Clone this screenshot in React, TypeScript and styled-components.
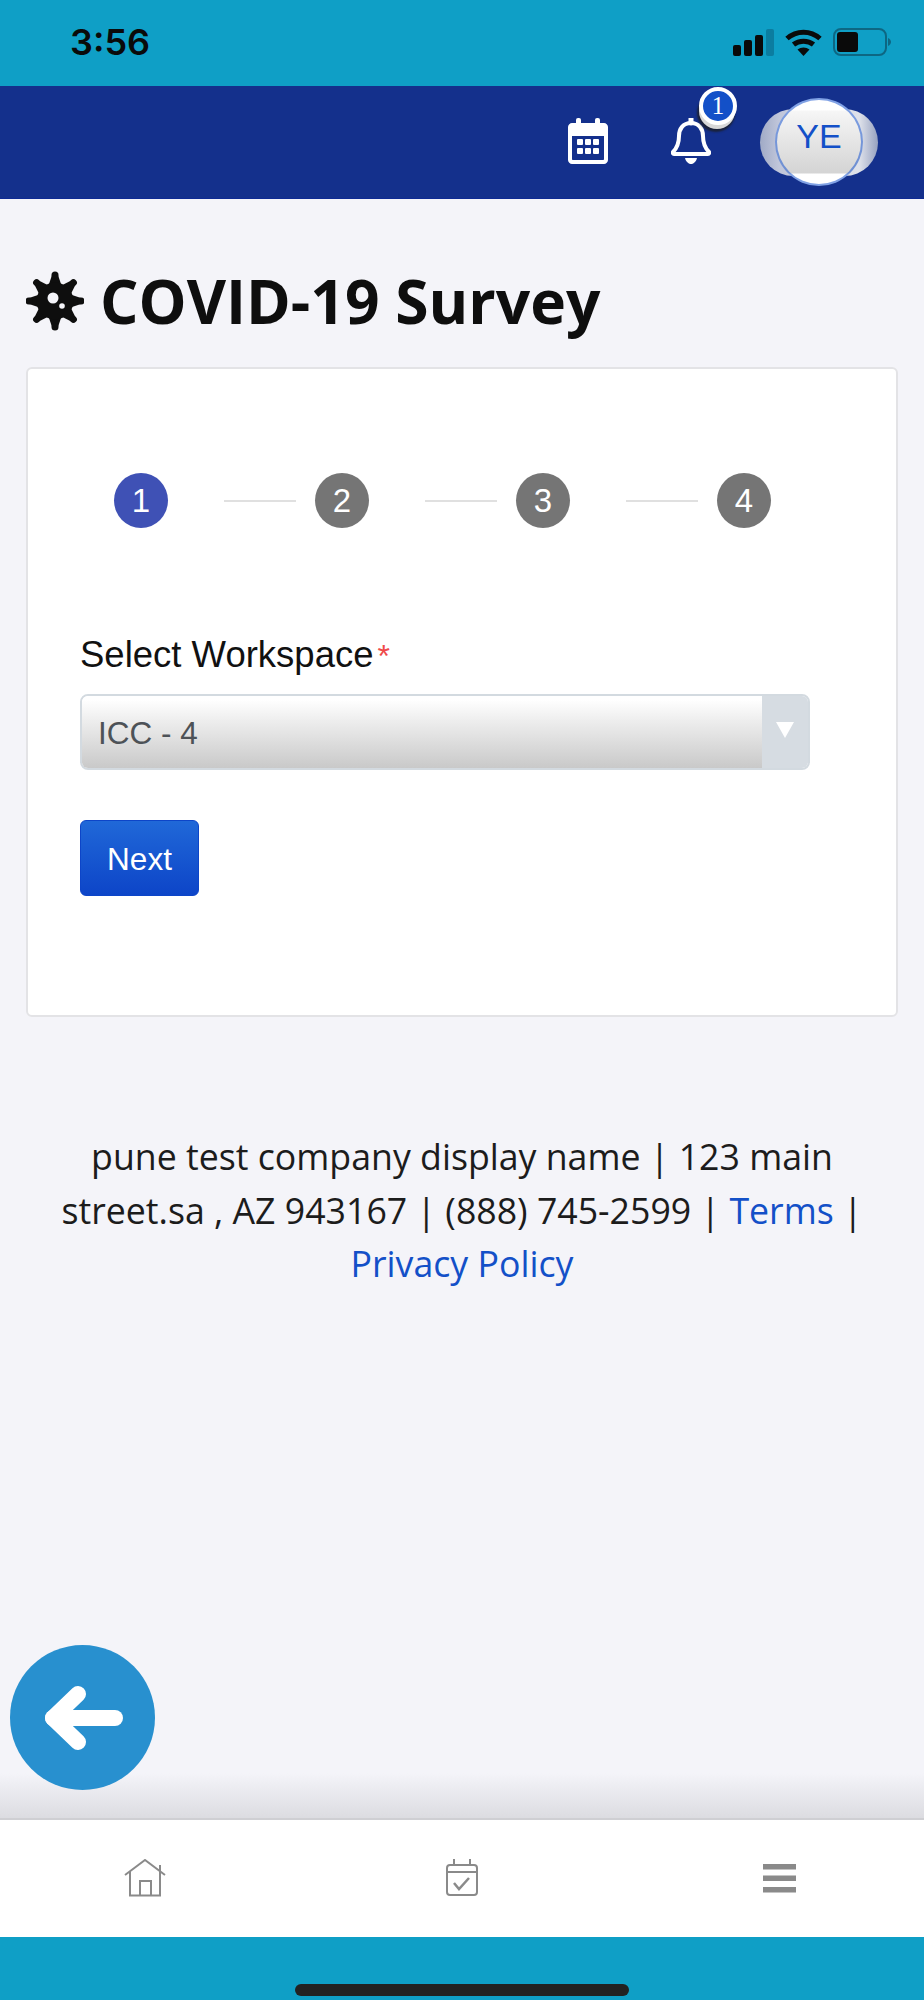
import React from "react";
import { createGlobalStyle, styled } from "styled-components";

const colors = {
  teal: "#0f9fc6",
  navy: "#14308c",
  page: "#f4f4f9",
  blue: "#1350c8",
  grey: "#8a8a8a",
};

const GlobalStyle = createGlobalStyle`
  html, body {
    margin: 0;
    padding: 0;
    background: ${colors.page};
  }
`;

const Page = styled.div`
  position: relative;
  width: 924px;
  height: 2000px;
  display: flex;
  flex-direction: column;
  background: ${colors.page};
  overflow: hidden;
`;

const StatusBar = styled.div`
  height: 86px;
  flex: none;
  box-sizing: border-box;
  background: ${colors.teal};
  display: flex;
  align-items: flex-start;
  justify-content: space-between;
  padding: 20px 33px 0 70px;
`;

const Time = styled.div`
  font-family: Inter, "Liberation Sans", sans-serif;
  font-size: 36px;
  line-height: 44px;
  font-weight: 600;
  color: #0a0a0a;
`;

const StatusIcons = styled.div`
  display: flex;
  align-items: center;
  gap: 11px;
  margin-top: 8px;
`;

const NavBar = styled.div`
  height: 113px;
  flex: none;
  box-sizing: border-box;
  background: ${colors.navy};
  border-bottom: 1px solid #0e2a94;
  display: flex;
  align-items: center;
  justify-content: flex-end;
  padding: 0 46px 0 0;
`;

const NavIcon = styled.div<{ $gap: number }>`
  position: relative;
  width: 40px;
  height: 48px;
  margin-right: ${(p) => p.$gap}px;
`;

const Badge = styled.div`
  position: absolute;
  left: 28px;
  top: -31px;
  width: 38px;
  height: 38px;
  box-sizing: border-box;
  border: 4px solid #fff;
  border-radius: 50%;
  background: ${colors.blue};
  color: #fff;
  font-family: "Liberation Serif", serif;
  font-size: 25px;
  line-height: 29px;
  text-align: center;
  box-shadow: -1px 5px 0 -1px #d8d8d8, -2px 7px 2px rgba(30, 30, 30, 0.75);
`;

const Avatar = styled.div`
  position: relative;
  width: 118px;
  height: 88px;
  display: flex;
  justify-content: center;
`;

const AvatarLobes = styled.div`
  position: absolute;
  left: 0;
  top: 11px;
  width: 118px;
  height: 67px;
  border-radius: 34px;
  background: linear-gradient(90deg, #a0aac6 0%, #c0c6da 16%, #dfe2ea 84%, #96a1c0 100%);
`;

const AvatarFace = styled.div`
  position: relative;
  width: 88px;
  height: 88px;
  box-sizing: border-box;
  border: 2px solid rgba(26, 86, 208, 0.55);
  border-radius: 50%;
  background: linear-gradient(180deg, #fff 0%, #fff 12%, #f6f6f6 13%, #d4d4d4 87%, #fff 88%);
  color: ${colors.blue};
  font-family: "Liberation Sans", sans-serif;
  font-size: 34px;
  line-height: 72px;
  text-align: center;
`;

const Main = styled.main`
  flex: 1;
  box-sizing: border-box;
  padding: 64px 26px 0;
  background: linear-gradient(180deg, ${colors.page} 0, ${colors.page} 1574px, #dcdce1 1619px);
`;

const Heading = styled.h1`
  margin: 0 0 28px;
  height: 76px;
  display: flex;
  align-items: center;
  gap: 16px;
  font-family: "Open Sans", sans-serif;
  font-size: 60.500px;
  line-height: 76px;
  font-weight: 700;
  color: #0e0e0e;
`;

const Card = styled.section`
  height: 650px;
  box-sizing: border-box;
  background: #fff;
  border: 2px solid #e3e3e6;
  border-radius: 6px;
  padding: 104px 52px 0;
`;

const Stepper = styled.div`
  display: flex;
  align-items: center;
  padding-left: 34px;
  margin-bottom: 105px;
`;

const StepCircle = styled.div<{ $active?: boolean }>`
  width: 54px;
  height: 55px;
  flex: none;
  border-radius: 50%;
  background: ${(p) => (p.$active ? "#3f51b5" : "#757575")};
  color: #fff;
  font-family: "Liberation Sans", sans-serif;
  font-size: 33px;
  line-height: 55px;
  text-align: center;
`;

const StepLine = styled.div`
  width: 72px;
  height: 2px;
  flex: none;
  margin: 0 19px 0 56px;
  background: #e0e0e0;
`;

const FieldLabel = styled.label`
  display: block;
  font-family: "Liberation Sans", sans-serif;
  font-size: 36.500px;
  line-height: 44px;
  color: #111;
  margin-bottom: 16px;
`;

const Required = styled.span`
  color: #ef4a4a;
  font-size: 32px;
  margin-left: 4px;
`;

const SelectBox = styled.div`
  width: 730px;
  height: 76px;
  box-sizing: border-box;
  display: flex;
  border: 2px solid #d3dae0;
  border-radius: 8px;
  overflow: hidden;
  margin-bottom: 50px;
`;

const SelectValue = styled.div`
  flex: 1;
  padding-left: 16px;
  background: linear-gradient(180deg, #fff 5%, #f0f0f0 30%, #c9c9c9 100%);
  color: #4d5257;
  font-family: "Liberation Sans", sans-serif;
  font-size: 31.500px;
  line-height: 74px;
`;

const SelectArrow = styled.div`
  width: 46px;
  display: flex;
  justify-content: center;
  padding-top: 26px;
  box-sizing: border-box;
  background: #d6dce2;
`;

const NextButton = styled.button`
  display: block;
  width: 119px;
  height: 76px;
  border: 1px solid #0d45c8;
  border-radius: 6px;
  background: linear-gradient(180deg, #2068d8 0%, #0d45c8 100%);
  color: #fff;
  font-family: "Liberation Sans", sans-serif;
  font-size: 31.500px;
  padding: 3px 0 0;
`;

const Footer = styled.p`
  margin: 113px 0 0;
  text-align: center;
  font-family: "Open Sans", sans-serif;
  font-size: 35.700px;
  line-height: 53.500px;
  color: #1c1c1c;
`;

const FooterLink = styled.a`
  color: ${colors.blue};
  text-decoration: none;
`;

const BackButton = styled.div`
  position: absolute;
  left: 10px;
  top: 1645px;
  width: 145px;
  height: 145px;
  border-radius: 50%;
  background: #2890cf;
  display: flex;
  align-items: center;
  justify-content: center;
`;

const TabBar = styled.nav`
  height: 119px;
  flex: none;
  box-sizing: border-box;
  background: #fff;
  border-top: 2px solid #cfcfd3;
  display: grid;
  grid-template-columns: 290px 344px 290px;
  grid-template-rows: 38px;
  align-items: center;
  justify-items: center;
  padding-top: 39px;
`;

const BottomBar = styled.div`
  height: 63px;
  flex: none;
  background: ${colors.teal};
  display: flex;
  justify-content: center;
  align-items: flex-end;
  padding-bottom: 4px;
  box-sizing: border-box;
`;

const HomeIndicator = styled.div`
  width: 334px;
  height: 12px;
  border-radius: 6px;
  background: #222;
`;

const SignalIcon = () => (
  <svg width="41" height="27" viewBox="0 0 41 27">
    <rect x="0" y="16" width="8" height="11" rx="2" fill="#0a0a0a" />
    <rect x="11" y="11" width="8" height="16" rx="2" fill="#0a0a0a" />
    <rect x="22" y="6" width="8" height="21" rx="2" fill="#0a0a0a" />
    <rect x="33" y="0" width="8" height="27" rx="2" fill="#0b7da0" />
  </svg>
);

const WifiIcon = () => (
  <svg width="37" height="27" viewBox="0 0 37 27" fill="none" stroke="#0a0a0a" strokeWidth="5">
    <path d="M2 9.500C11.500 1 25.500 1 35 9.500" />
    <path d="M8.500 15.500C14 11 23 11 28.500 15.500" />
    <path d="M18.500 27L12.500 20.500C16 17.800 21 17.800 24.500 20.500Z" fill="#0a0a0a" stroke="none" />
  </svg>
);

const BatteryIcon = () => (
  <svg width="58" height="28" viewBox="0 0 58 28">
    <rect x="1" y="1" width="52" height="26" rx="7" fill="none" stroke="#0d6783" strokeWidth="2" />
    <rect x="4" y="4" width="21" height="20" rx="3" fill="#0a0a0a" />
    <path d="M55 10C57 11 58 12.500 58 14C58 15.500 57 17 55 18Z" fill="#0d6783" />
  </svg>
);

const CalendarIcon = () => (
  <svg width="40" height="46" viewBox="0 0 40 46" fill="#fff">
    <rect x="8" y="0" width="5" height="10" rx="2" />
    <rect x="27" y="0" width="5" height="10" rx="2" />
    <path
      fillRule="evenodd"
      d="M4 5H36C38 5 40 7 40 9V42C40 44 38 46 36 46H4C2 46 0 44 0 42V9C0 7 2 5 4 5ZM4 18V41C4 41.600 4.400 42 5 42H35C35.600 42 36 41.600 36 41V18Z"
    />
    {[9, 17, 25].map((x) =>
      [21, 30].map((y) => <rect key={`${x}-${y}`} x={x} y={y} width="6" height="6" rx="1" />)
    )}
  </svg>
);

const BellIcon = () => (
  <svg width="40" height="46" viewBox="0 0 40 46" fill="none" stroke="#fff" strokeWidth="4" strokeLinejoin="round">
    <path d="M20 5C12 5 8 11 8 18C8 27 5 31 2 34C1.500 35 2 36 3 36H37C38 36 38.500 35 38 34C35 31 32 27 32 18C32 11 28 5 20 5Z" />
    <path d="M20 0V5" strokeLinecap="round" strokeWidth="5" />
    <path d="M14 40H26C25 44 22 46 20 46C18 46 15 44 14 40Z" fill="#fff" stroke="none" />
  </svg>
);

const VirusIcon = () => (
  <svg width="58" height="60" viewBox="0 0 58 60">
    {[0, 45, 90, 135, 180, 225, 270, 315].map((a) => (
      <g key={a} transform={`rotate(${a} 29 30)`}>
        <path d="M22 16L26 4H32L36 16Z" fill="#0e0e0e" />
        <circle cx="29" cy="4" r="3.500" fill="#0e0e0e" />
      </g>
    ))}
    <circle cx="29" cy="30" r="18.500" fill="#0e0e0e" />
    <circle cx="27" cy="27" r="5.500" fill="#f4f4f9" />
    <circle cx="36" cy="35" r="2.800" fill="#f4f4f9" />
  </svg>
);

const BackArrow = () => (
  <svg width="80" height="64" viewBox="0 0 80 64" fill="none" stroke="#fff" strokeWidth="16" strokeLinecap="round" strokeLinejoin="round">
    <path d="M35 8L10 32L35 56" />
    <path d="M10 32H72" />
  </svg>
);

const HomeIcon = () => (
  <svg width="42" height="38" viewBox="0 0 42 38" fill="none" stroke="#8a8a8a" strokeWidth="2">
    <path d="M1 16L21 1L41 16" />
    <path d="M6 12V36.500H36V6" />
    <path d="M16 36.500V22H27V36.500" />
  </svg>
);

const CalendarCheckIcon = () => (
  <svg width="32" height="38" viewBox="0 0 32 38" fill="none" stroke="#8a8a8a" strokeWidth="2">
    <rect x="1" y="6" width="30" height="30" rx="3" />
    <path d="M1 13H31" />
    <path d="M8 0V6M24 0V6" />
    <path d="M8 24L13 30L23 19" strokeWidth="2.500" />
  </svg>
);

const MenuIcon = () => (
  <svg width="33" height="29" viewBox="0 0 33 29" fill="#8a8a8a">
    <rect y="0" width="33" height="5.500" />
    <rect y="11.500" width="33" height="5.500" />
    <rect y="23" width="33" height="5.500" />
  </svg>
);

const steps = [1, 2, 3, 4];

const App = () => {
  return (
    <Page>
      <GlobalStyle />
      <StatusBar>
        <Time>3:56</Time>
        <StatusIcons>
          <SignalIcon />
          <WifiIcon />
          <BatteryIcon />
        </StatusIcons>
      </StatusBar>
      <NavBar>
        <NavIcon $gap={63}>
          <CalendarIcon />
        </NavIcon>
        <NavIcon $gap={49}>
          <BellIcon />
          <Badge>1</Badge>
        </NavIcon>
        <Avatar>
          <AvatarLobes />
          <AvatarFace>YE</AvatarFace>
        </Avatar>
      </NavBar>
      <Main>
        <Heading>
          <VirusIcon />
          COVID-19 Survey
        </Heading>
        <Card>
          <Stepper>
            {steps.map((step) => (
              <React.Fragment key={step}>
                <StepCircle $active={step === 1}>{step}</StepCircle>
                {step < 4 && <StepLine />}
              </React.Fragment>
            ))}
          </Stepper>
          <FieldLabel>
            Select Workspace<Required>*</Required>
          </FieldLabel>
          <SelectBox>
            <SelectValue>ICC - 4</SelectValue>
            <SelectArrow>
              <svg width="18" height="16" viewBox="0 0 18 16">
                <path d="M0 0H18L9 16Z" fill="#fff" />
              </svg>
            </SelectArrow>
          </SelectBox>
          <NextButton>Next</NextButton>
        </Card>
        <Footer>
          pune test company display name | 123 main
          <br />
          street.sa , AZ 943167 | (888) 745-2599 | <FooterLink>Terms</FooterLink> |
          <br />
          <FooterLink>Privacy Policy</FooterLink>
        </Footer>
      </Main>
      <BackButton>
        <BackArrow />
      </BackButton>
      <TabBar>
        <HomeIcon />
        <CalendarCheckIcon />
        <MenuIcon />
      </TabBar>
      <BottomBar>
        <HomeIndicator />
      </BottomBar>
    </Page>
  );
};

export default App;
